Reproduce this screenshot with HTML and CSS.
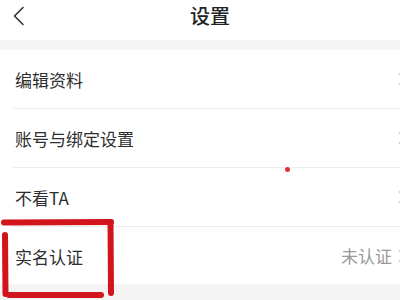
FILE: index.html
```html
<!DOCTYPE html>
<html lang="zh">
<head>
<meta charset="utf-8">
<link rel="stylesheet" href="styles.css">
</head>
<body>
<div class="page">
  <header class="nav">
    <svg class="back" width="14" height="20" viewBox="0 0 14 20"><path d="M11 1.5 L2.5 10 L11 18.5" fill="none" stroke="#333" stroke-width="1.6" stroke-linecap="round" stroke-linejoin="round"/></svg>
    <h1 class="title">设置</h1>
  </header>
  <div class="band"></div>
  <ul class="list">
    <li class="row"><span class="label">编辑资料</span><span class="right"><svg class="arrow" width="12" height="14" viewBox="0 0 12 14"><path d="M2 1.5 L8 7 L2 12.5" fill="none" stroke="#c4c4c4" stroke-width="1.3"/></svg></span></li>
    <li class="row"><span class="label">账号与绑定设置</span><span class="right"><svg class="arrow" width="12" height="14" viewBox="0 0 12 14"><path d="M2 1.5 L8 7 L2 12.5" fill="none" stroke="#c4c4c4" stroke-width="1.3"/></svg></span></li>
    <li class="row"><span class="label">不看TA</span><span class="right"><svg class="arrow" width="12" height="14" viewBox="0 0 12 14"><path d="M2 1.5 L8 7 L2 12.5" fill="none" stroke="#c4c4c4" stroke-width="1.3"/></svg></span></li>
    <li class="row"><span class="label">实名认证</span><span class="right"><span class="value">未认证</span><svg class="arrow" width="12" height="14" viewBox="0 0 12 14"><path d="M2 1.5 L8 7 L2 12.5" fill="none" stroke="#c4c4c4" stroke-width="1.3"/></svg></span></li>
  </ul>
  <div class="bottom"></div>
  <span class="dot"></span>
  <svg class="mark" width="400" height="300" viewBox="0 0 400 300">
    <g fill="none" stroke="#d2151d" stroke-width="6" stroke-linecap="round" stroke-linejoin="round">
      <path d="M4 222.5 L111 222"/>
      <path d="M110.5 222 L111 293"/>
      <path d="M5 235 L5.5 294"/>
      <path d="M9 295 L101 295"/>
    </g>
  </svg>
</div>
</body>
</html>
```
FILE: styles.css
```css
* { box-sizing: border-box; }
html, body {
  margin: 0;
  padding: 0;
  width: 400px;
  height: 300px;
  overflow: hidden;
  background: #fff;
  font-family: "Noto Sans CJK SC", "Noto Sans", sans-serif;
}
.page {
  position: relative;
  width: 400px;
  height: 300px;
  overflow: hidden;
}
.nav {
  height: 40px;
  display: flex;
  align-items: center;
  position: relative;
  padding-left: 12px;
}
.back { display: block; margin-top: -8px; }
.title {
  position: absolute;
  left: 10px;
  right: -10px;
  top: 0;
  margin: 0;
  text-align: center;
  font-size: 20px;
  font-weight: 500;
  line-height: 32px;
  color: #222;
}
.band {
  height: 10px;
  background: #f5f5f5;
}
.list {
  list-style: none;
  margin: 0 -9px 0 0;
  padding: 0 0 0 13px;
  width: 409px;
}
.row {
  height: 59px;
  display: flex;
  align-items: center;
  justify-content: space-between;
  border-bottom: 1px solid #ececec;
  padding-left: 2px;
}
.row:last-child {
  height: 57px;
  border-bottom: none;
}
.label {
  font-size: 17px;
  color: #2e2e2e;
  line-height: 1;
  margin-top: 1px;
}
.right {
  display: flex;
  align-items: center;
}
.value {
  font-size: 17px;
  color: #999;
  line-height: 1;
  margin-right: 5px;
}
.arrow { display: block; }
.bottom {
  height: 20px;
  background: #f4f4f4;
}
.dot {
  position: absolute;
  left: 285px;
  top: 167px;
  width: 5px;
  height: 5px;
  border-radius: 50%;
  background: #e2303a;
}
.mark {
  position: absolute;
  left: 0;
  top: 0;
  pointer-events: none;
}
```
